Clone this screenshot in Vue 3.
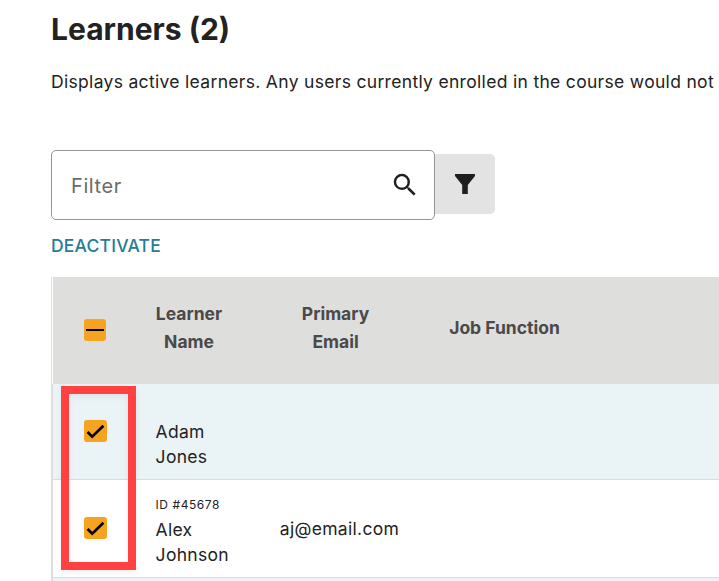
<script setup>
import { ref, computed } from 'vue'

const filter = ref('')

const learners = ref([
  { id: '', first: 'Adam', last: 'Jones', email: '', job: '', selected: true },
  { id: 'ID #45678', first: 'Alex', last: 'Johnson', email: 'aj@email.com', job: '', selected: true }
])

const learnerCount = computed(() => learners.value.length)

const toggle = (learner) => {
  learner.selected = !learner.selected
}
</script>

<template>
  <div class="learners-page">
    <h1>Learners ({{ learnerCount }})</h1>
    <p class="description">Displays active learners. Any users currently enrolled in the course would not</p>

    <div class="filter-row">
      <div class="filter-box">
        <input v-model="filter" type="text" placeholder="Filter" />
        <svg class="search-icon" width="30" height="30" viewBox="0 0 24 24">
          <path
            fill="#1f1f1f"
            d="M15.5 14h-.79l-.28-.27A6.471 6.471 0 0 0 16 9.5 6.5 6.5 0 1 0 9.5 16c1.61 0 3.09-.59 4.23-1.57l.27.28v.79l5 4.99L20.49 19l-4.99-5zm-6 0C7.01 14 5 11.99 5 9.5S7.01 5 9.5 5 14 7.01 14 9.5 11.99 14 9.5 14z"
          />
        </svg>
      </div>
      <button class="filter-button" type="button">
        <svg width="20" height="20" viewBox="0 0 20 20">
          <path fill="#1f1f1f" d="M0 0H20V2L12.8 11V20H7.2V11L0 2Z" />
        </svg>
      </button>
    </div>

    <button class="deactivate" type="button">DEACTIVATE</button>

    <div class="table">
      <div class="row header">
        <div class="cell check-cell">
          <span class="checkbox partial">
            <svg width="22" height="22" viewBox="0 0 22 22">
              <path d="M2 11H20" fill="none" stroke="#000" stroke-width="2" />
            </svg>
          </span>
        </div>
        <div class="cell title">Learner<br />Name</div>
        <div class="cell title">Primary<br />Email</div>
        <div class="cell title job">Job Function</div>
      </div>

      <div
        v-for="(learner, index) in learners"
        :key="learner.first"
        class="row"
        :class="index % 2 === 0 ? 'odd' : 'even'"
      >
        <div class="cell check-cell">
          <span class="checkbox" @click="toggle(learner)">
            <svg v-if="learner.selected" width="23" height="22" viewBox="0 0 23 22">
              <path d="M3.5 12L8.2 16.7L19.4 5.7" fill="none" stroke="#000" stroke-width="2.7" />
            </svg>
          </span>
        </div>
        <div class="cell name">
          <small v-if="learner.id">{{ learner.id }}</small>
          <span>{{ learner.first }}</span>
          <span>{{ learner.last }}</span>
        </div>
        <div class="cell email">{{ learner.email }}</div>
        <div class="cell job">{{ learner.job }}</div>
      </div>
      <div class="row next"></div>

      <div class="highlight"></div>
    </div>
  </div>
</template>

<style>
body {
  margin: 0;
  background: #fff;
  overflow: hidden;
}
</style>

<style scoped>
.learners-page {
  box-sizing: border-box;
  width: 719px;
  height: 581px;
  padding-left: 51px;
  overflow: hidden;
  font-family: Inter, sans-serif;
  color: #222;
}

h1 {
  margin: 0;
  padding-top: 9px;
  font-size: 30px;
  line-height: 40px;
  font-weight: 700;
}

.description {
  margin: 19px 0 0;
  font-size: 17.5px;
  line-height: 28px;
  letter-spacing: 0.315px;
  white-space: nowrap;
}

.filter-row {
  display: flex;
  align-items: center;
  height: 70px;
  margin-top: 54px;
}

.filter-box {
  box-sizing: border-box;
  display: flex;
  align-items: center;
  width: 384px;
  height: 70px;
  padding: 0 14px 0 19px;
  border: 1px solid #949494;
  border-radius: 5px;
}

input {
  flex: 1;
  min-width: 0;
  padding: 2px 0 0;
  border: none;
  outline: none;
  background: transparent;
  font-family: inherit;
  font-size: 20px;
  letter-spacing: 0.6px;
}

input::placeholder {
  color: #6b6b6b;
}

.filter-button {
  display: flex;
  align-items: center;
  justify-content: center;
  width: 60px;
  height: 60px;
  margin-bottom: 2px;
  padding: 0;
  border: none;
  border-radius: 0 5px 5px 0;
  background: #e3e3e3;
}

.deactivate {
  display: block;
  height: 28px;
  margin: 11px 0 18px;
  padding: 0;
  border: none;
  background: none;
  font-family: inherit;
  font-size: 17.5px;
  font-weight: 450;
  letter-spacing: 0.2px;
  color: #267c96;
}

.table {
  position: relative;
  border-left: 1px solid #dededd;
}

.row {
  box-sizing: border-box;
  display: grid;
  grid-template-columns: 84px 104px 189px 1fr;
  align-items: center;
  border-bottom: 1px solid #d9dddf;
  border-left: 1px solid #dededd;
  font-size: 17.5px;
  line-height: 25px;
  letter-spacing: 0.3px;
}

.header {
  height: 107px;
  border-top: 1px solid #dededc;
  border-bottom: none;
  border-left-color: #fff;
  background: #dededc;
  font-weight: 700;
  line-height: 28px;
  letter-spacing: 0;
  text-align: center;
  color: #4a4a4a;
}

.header .check-cell {
  padding-bottom: 3px;
}

.title {
  padding-bottom: 7px;
}

.odd {
  height: 96px;
  background: #eaf3f6;
}

.even {
  height: 98px;
  background: #fff;
}

.next {
  height: 20px;
  background: #eaf3f6;
}

.check-cell {
  display: flex;
  padding: 0 0 2px 31px;
}

.checkbox {
  display: flex;
  width: 23px;
  height: 22px;
  border-radius: 3px;
  background: #f6a31f;
}

.partial {
  width: 22px;
}

.header .job {
  padding-right: 140px;
}

.name {
  display: flex;
  flex-direction: column;
  padding-left: 18.6px;
}

.odd .name {
  padding-top: 24px;
}

.even .name {
  padding-top: 2px;
}

.name small {
  font-size: 12px;
  line-height: 24px;
  letter-spacing: 0.55px;
}

.email {
  padding-left: 8px;
  text-align: center;
}

.highlight {
  box-sizing: border-box;
  position: absolute;
  left: 9px;
  top: 109px;
  width: 75px;
  height: 184px;
  border: 8px solid #ff4141;
  box-shadow: 0 3px 6px rgba(0, 0, 0, 0.06), inset 0 3px 6px rgba(0, 0, 0, 0.06);
  pointer-events: none;
}
</style>
